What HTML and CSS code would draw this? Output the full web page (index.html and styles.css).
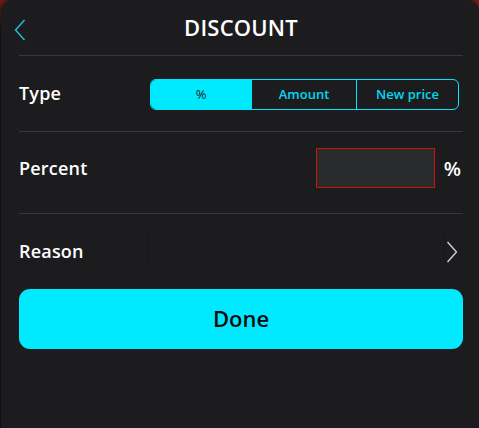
FILE: index.html
```html
<!DOCTYPE html>
<html>
<head>
<meta charset="utf-8">
<link rel="stylesheet" href="styles.css">
</head>
<body>
<div class="backdrop">
  <div class="sheet">
    <header class="header">
      <button class="back" aria-label="Back">
        <svg width="12" height="22" viewBox="0 0 12 22"><path d="M10.5 1 L1.5 11 L10.5 21" fill="none" stroke="#18c6dc" stroke-width="1.4"/></svg>
      </button>
      <h1 class="title">DISCOUNT</h1>
    </header>
    <div class="rows">
      <div class="row row-type">
        <span class="label">Type</span>
        <div class="segmented">
          <span class="seg active">%</span>
          <span class="seg">Amount</span>
          <span class="seg">New price</span>
        </div>
      </div>
      <div class="row row-percent">
        <span class="label">Percent</span>
        <div class="input-wrap">
          <div class="input"></div>
          <span class="unit">%</span>
        </div>
      </div>
      <div class="row row-reason">
        <span class="label">Reason</span>
        <div class="reason-box"></div>
        <svg class="chev" width="12" height="22" viewBox="0 0 12 22"><path d="M1.5 1 L10.5 11 L1.5 21" fill="none" stroke="#d8d8d8" stroke-width="1.3"/></svg>
      </div>
    </div>
    <button class="done">Done</button>
  </div>
</div>
</body>
</html>
```
FILE: styles.css
```css
html, body {
  margin: 0;
  padding: 0;
  width: 479px;
  height: 428px;
  overflow: hidden;
  background: #121214;
  font-family: "Open Sans", "Lato", sans-serif;
}
.backdrop {
  height: 428px;
  background:
    radial-gradient(circle at 0 0, #6a1a14 0, #3a1612 14px, rgba(18,18,20,0) 30px),
    radial-gradient(circle at 100% 0, #7a1a12 0, #3a1612 14px, rgba(18,18,20,0) 30px),
    #111113;
}
.sheet {
  margin-left: 1px;
  height: 428px;
  background: #1c1c1e;
  border-radius: 11px 11px 0 0;
  padding: 0 16px 0 18px;
  box-sizing: border-box;
}
.header {
  position: relative;
  height: 55px;
  display: flex;
  align-items: center;
  justify-content: center;
  border-bottom: 1px solid #38383a;
}
.back {
  position: absolute;
  left: -5px;
  top: 19px;
  background: none;
  border: 0;
  padding: 0;
  width: 12px;
  height: 22px;
}
.title {
  margin: 0;
  color: #ffffff;
  font-size: 22px;
  font-weight: 600;
  letter-spacing: 0.2px;
  padding-bottom: 1px;
}
.row {
  display: flex;
  align-items: center;
  border-bottom: 1px solid #38383a;
  box-sizing: border-box;
}
.label {
  color: #ffffff;
  font-size: 18px;
  font-weight: 600;
  letter-spacing: 0.2px;
  flex: 1;
}
.row-type { height: 76px; padding-bottom: 2px; }
.segmented {
  display: flex;
  width: 307px;
  height: 29px;
  margin-right: 4px;
  margin-top: 3px;
  border: 1.5px solid #00e6ff;
  border-radius: 6px;
  overflow: hidden;
}
.seg {
  display: flex;
  align-items: center;
  justify-content: center;
  color: #00d9f2;
  font-size: 13px;
  font-weight: 600;
  border-left: 1.5px solid #00e6ff;
}
.seg:nth-child(1) { width: 100px; border-left: 0; background: #00e9ff; color: #1a1a1a; font-weight: 500; }
.seg:nth-child(2) { width: 104px; }
.seg:nth-child(3) { flex: 1; }
.row-percent { height: 82px; padding-bottom: 9px; }
.input-wrap {
  display: flex;
  align-items: center;
  gap: 9px;
  margin-right: 2px;
}
.input {
  width: 117px;
  height: 38px;
  border: 1.5px solid #d0100c;
  background: #2a2b2d;
}
.unit {
  color: #ffffff;
  font-size: 20px;
  font-weight: 600;
}
.row-reason {
  height: 75px;
  border-bottom: 0;
  padding-bottom: 2px;
}
.row-reason .label { flex: 0 0 128px; }
.reason-box {
  flex: 1;
  height: 39px;
  border: 1px solid #19191b;
  border-radius: 6px;
  margin-top: 2px;
}
.chev {
  margin-left: 1px;
  margin-right: 5px;
  margin-top: 2px;
}
.done {
  display: block;
  width: 444px;
  height: 60px;
  margin: 0;
  border: 0;
  border-radius: 11px;
  background: #00eaff;
  color: #0a0a0a;
  font-family: "Open Sans", "Lato", sans-serif;
  font-size: 22px;
  font-weight: 600;
  padding-bottom: 3px;
}
```
